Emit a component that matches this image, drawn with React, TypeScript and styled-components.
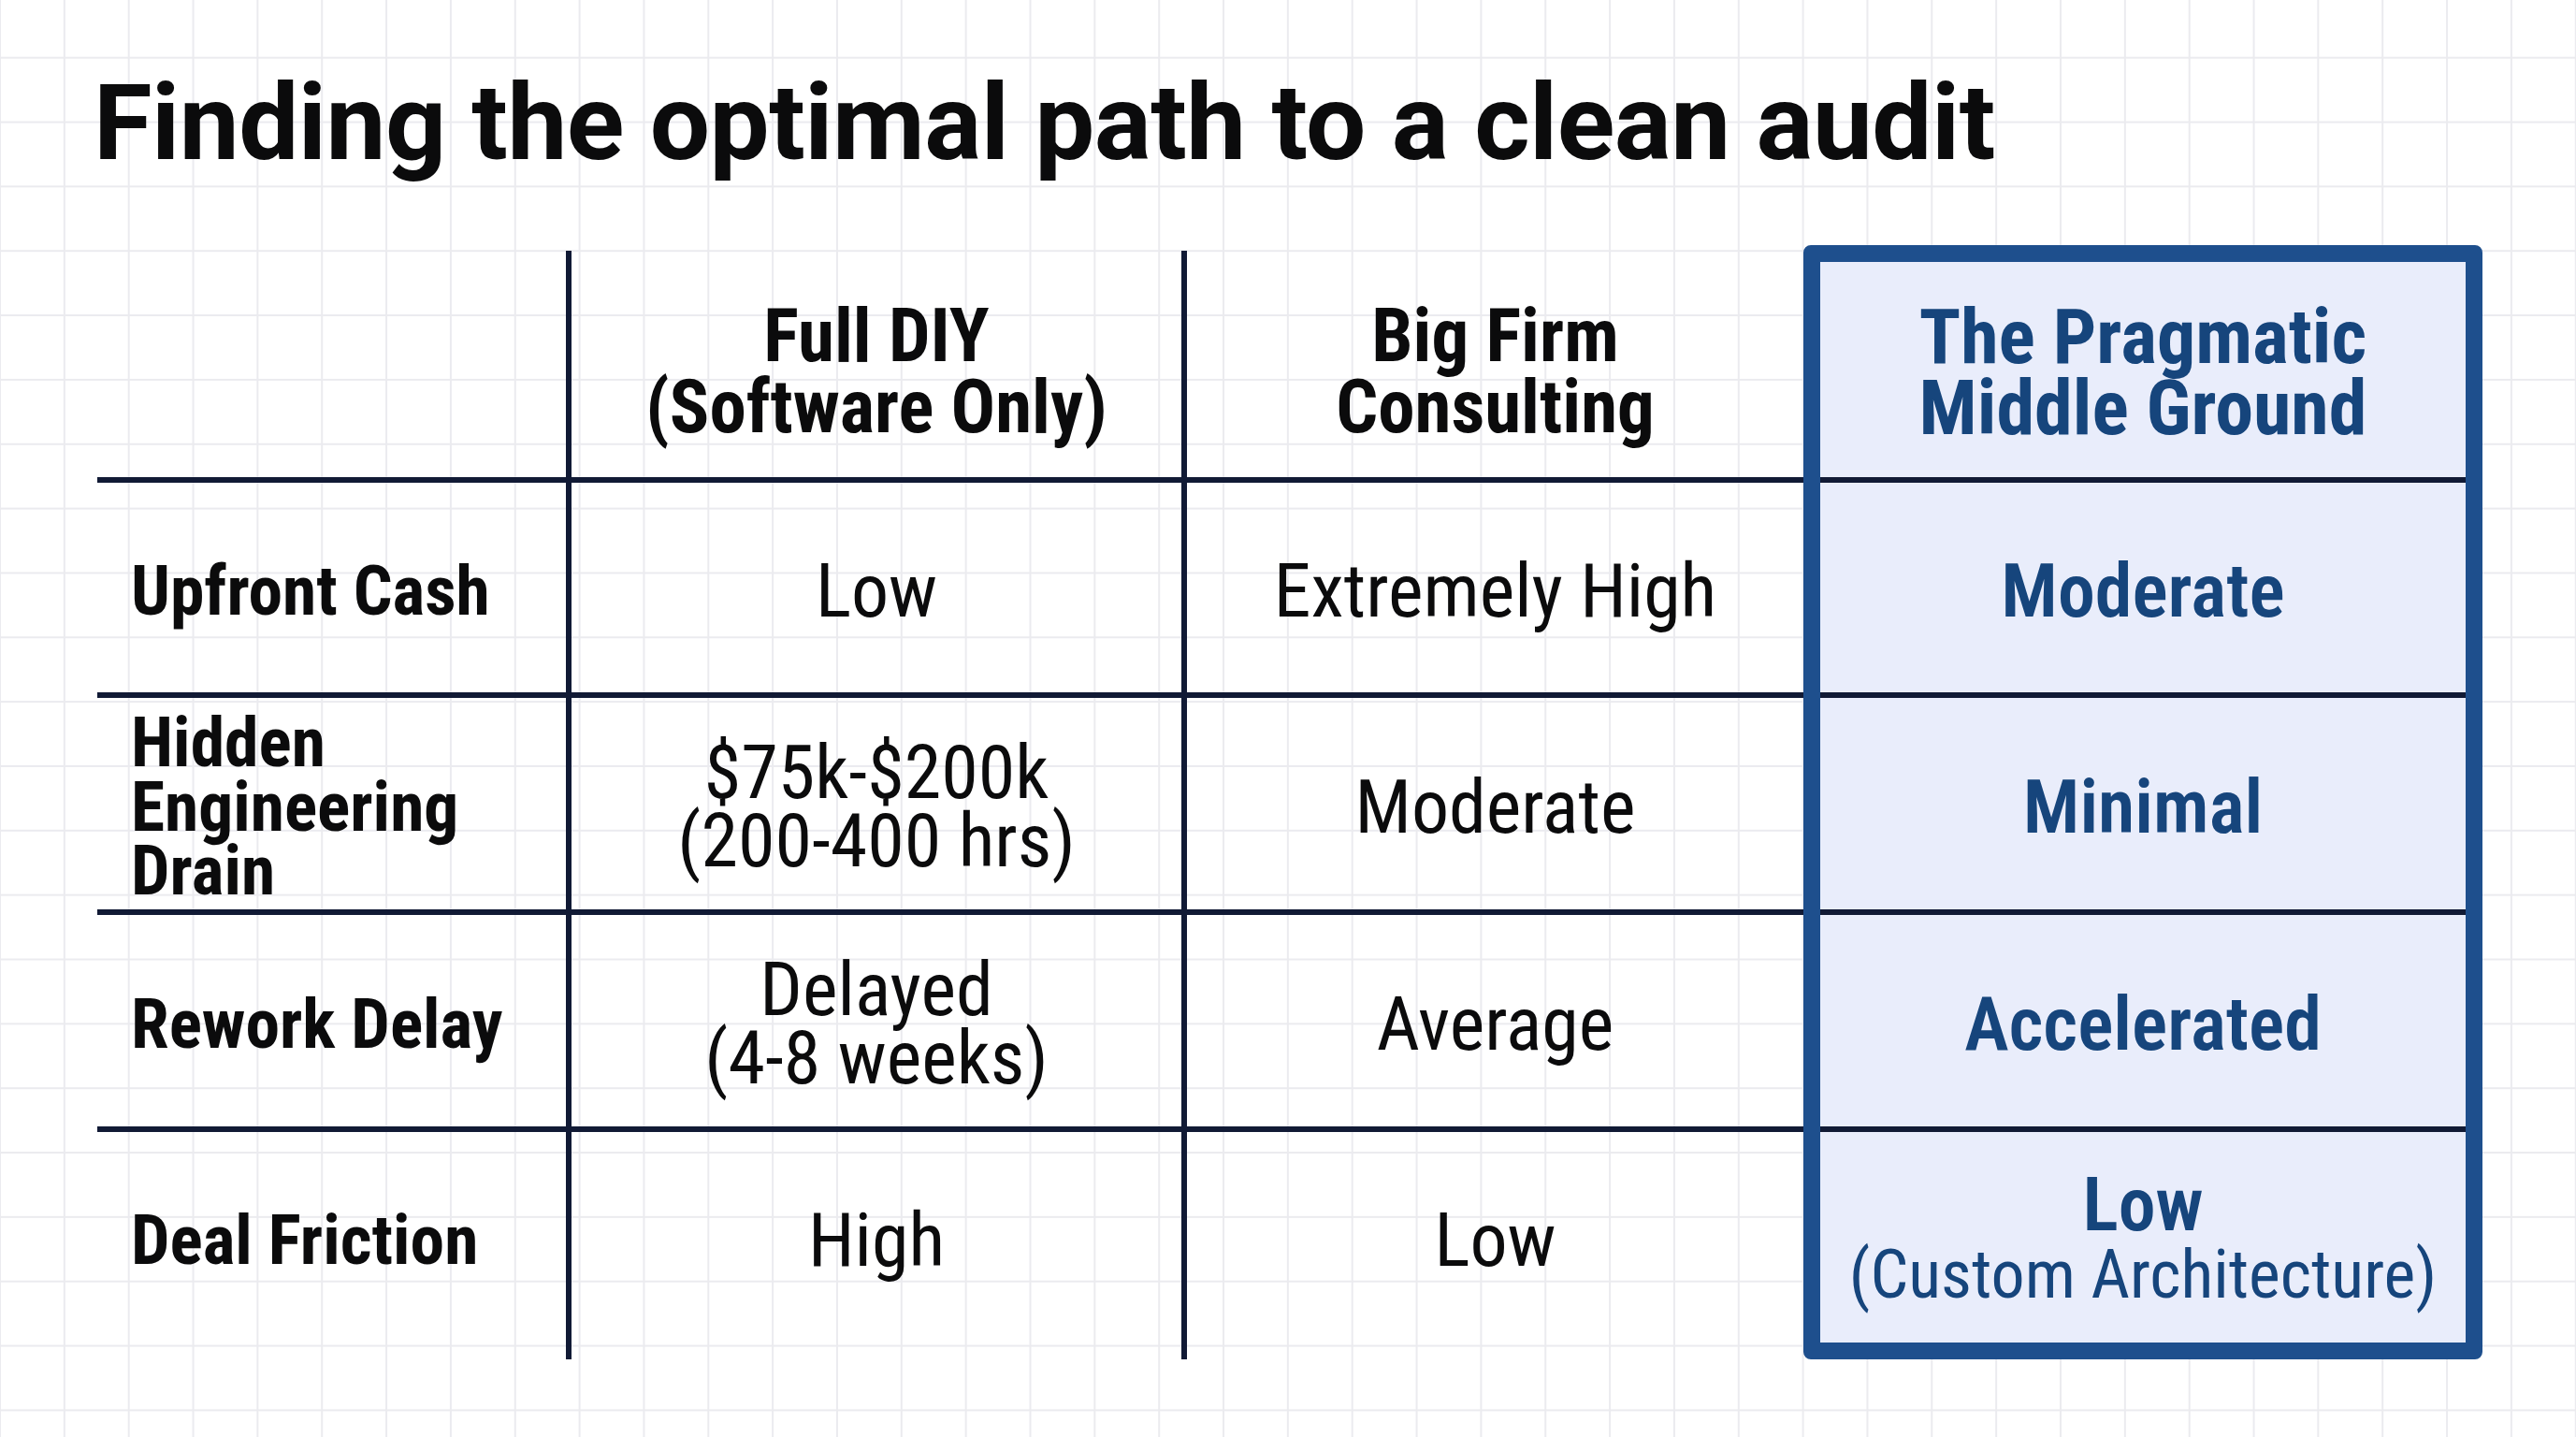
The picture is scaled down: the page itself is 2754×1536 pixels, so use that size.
import React from 'react'
import styled, { createGlobalStyle } from 'styled-components'

const Global = createGlobalStyle`
  html, body { margin: 0; padding: 0; }
  body { background: #ffffff; }
`

const ink = '#0b0b0c'
const navy = '#111a35'
const blue = '#1e4f8d'
const blueText = '#16457c'
const tint = '#e9edfb'
const cell = 68.85

const Page = styled.div`
  width: 2754px;
  height: 1536px;
  overflow: hidden;
  box-sizing: border-box;
  padding: 74px 0 0 104px;
  background-color: #ffffff;
  background-image:
    linear-gradient(to right, #ebebef 2px, transparent 2px),
    linear-gradient(to bottom, #ebebef 2px, transparent 2px);
  background-size: ${cell}px ${cell}px;
  background-position: -1px 60.7px;
  font-family: Roboto, 'Liberation Sans', sans-serif;
  color: ${ink};
`

const Title = styled.h1`
  margin: 0 0 74px -4px;
  font-family: Roboto, 'Liberation Sans', sans-serif;
  font-weight: 700;
  font-size: 114px;
  line-height: 114px;
  letter-spacing: -0.5px;
  color: ${ink};
  white-space: nowrap;
`

const Table = styled.div`
  display: grid;
  grid-template-columns: 501px 658px 665px 726px;
  grid-template-rows: 254px 230px 232px 232px 243px;
`

const Highlight = styled.div`
  grid-column: 4;
  grid-row: 1 / -1;
  border: 18px solid ${blue};
  border-radius: 8px;
  background: ${tint};
`

const Cell = styled.div<{ $col: number; $row: number }>`
  grid-column: ${({ $col }) => $col};
  grid-row: ${({ $row }) => $row + 1};
  display: flex;
  flex-direction: column;
  justify-content: center;
  align-items: ${({ $col }) => ($col === 1 ? 'flex-start' : 'center')};
  text-align: ${({ $col }) => ($col === 1 ? 'left' : 'center')};
  padding-left: ${({ $col }) => ($col === 1 ? '36px' : '0')};
  border-bottom: ${({ $row }) => ($row < 4 ? `6px solid ${navy}` : 'none')};
  border-left: ${({ $col }) => ($col === 2 || $col === 3 ? `6px solid ${navy}` : 'none')};
  margin: ${({ $col, $row }) =>
    $col === 4
      ? `${$row === 0 ? 18 : 0}px 18px ${$row === 4 ? 18 : 0}px`
      : `${$row === 0 && $col > 1 ? 6 : 0}px 0 0`};
  padding-top: ${({ $col, $row }) => ($row === 0 ? ($col < 4 ? '16px' : '6px') : '8px')};
  padding-bottom: ${({ $col, $row }) => ($row === 4 && $col < 4 ? '18px' : '0')};
`

const Head = styled.div<{ $accent?: boolean }>`
  font-stretch: 75%;
  font-weight: 700;
  font-size: ${({ $accent }) => ($accent ? '82px' : '79px')};
  line-height: 76px;
  white-space: nowrap;
  color: ${({ $accent }) => ($accent ? blueText : ink)};
`

const Label = styled.div`
  font-stretch: 75%;
  font-weight: 700;
  font-size: 73.5px;
  line-height: 68.5px;
  white-space: nowrap;
`

const Value = styled.div<{ $accent?: boolean; $small?: boolean }>`
  font-stretch: 75%;
  font-weight: ${({ $accent, $small }) => ($accent && !$small ? 600 : 400)};
  font-size: ${({ $small }) => ($small ? '72px' : '80px')};
  line-height: ${({ $small }) => ($small ? '76px' : '73px')};
  white-space: nowrap;
  color: ${({ $accent }) => ($accent ? blueText : ink)};
`

type RowData = {
  label: string[]
  diy: string[]
  firm: string[]
  mid: string[]
}

const rows: RowData[] = [
  { label: ['Upfront Cash'], diy: ['Low'], firm: ['Extremely High'], mid: ['Moderate'] },
  {
    label: ['Hidden', 'Engineering', 'Drain'],
    diy: ['$75k-$200k', '(200-400 hrs)'],
    firm: ['Moderate'],
    mid: ['Minimal'],
  },
  { label: ['Rework Delay'], diy: ['Delayed', '(4-8 weeks)'], firm: ['Average'], mid: ['Accelerated'] },
  { label: ['Deal Friction'], diy: ['High'], firm: ['Low'], mid: ['Low', '(Custom Architecture)'] },
]

const heads = [
  ['Full DIY', '(Software Only)'],
  ['Big Firm', 'Consulting'],
  ['The Pragmatic', 'Middle Ground'],
]

export default function App() {
  return (
    <Page>
      <Global />
      <Title>Finding the optimal path to a clean audit</Title>
      <Table>
        <Highlight />
        <Cell $col={1} $row={0} />
        {heads.map((lines, i) => (
          <Cell key={i} $col={i + 2} $row={0}>
            {lines.map((t) => (
              <Head key={t} $accent={i === 2}>
                {t}
              </Head>
            ))}
          </Cell>
        ))}
        {rows.map((r, ri) => (
          <React.Fragment key={ri}>
            <Cell $col={1} $row={ri + 1}>
              {r.label.map((t) => (
                <Label key={t}>{t}</Label>
              ))}
            </Cell>
            <Cell $col={2} $row={ri + 1}>
              {r.diy.map((t) => (
                <Value key={t}>{t}</Value>
              ))}
            </Cell>
            <Cell $col={3} $row={ri + 1}>
              {r.firm.map((t) => (
                <Value key={t}>{t}</Value>
              ))}
            </Cell>
            <Cell $col={4} $row={ri + 1}>
              {r.mid.map((t, ti) => (
                <Value key={t} $accent $small={ti > 0}>
                  {t}
                </Value>
              ))}
            </Cell>
          </React.Fragment>
        ))}
      </Table>
    </Page>
  )
}
